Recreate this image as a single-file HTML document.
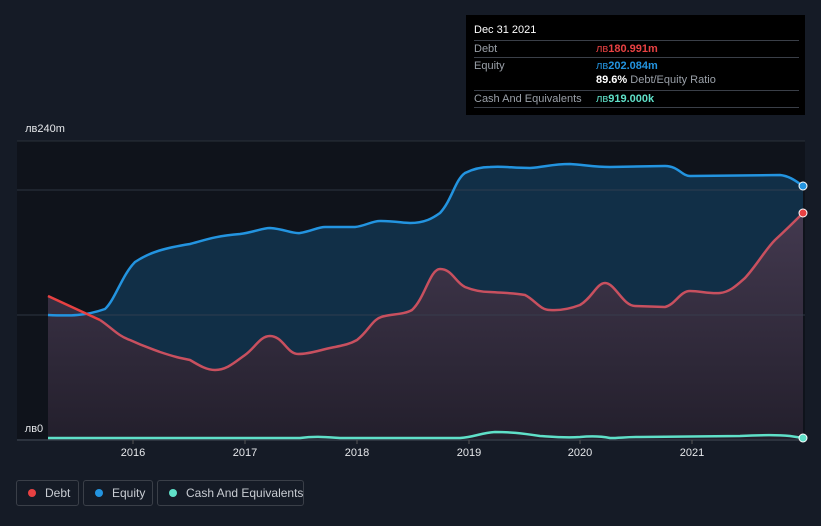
<!DOCTYPE html><html><head><style>
html,body{margin:0;width:821px;height:526px;overflow:hidden}
body{background:#151b26;font-family:"Liberation Sans",sans-serif;position:relative}
.tt{position:absolute;left:466px;top:15px;width:339px;height:100px;background:#000;color:#fff;font-size:11px}
.row{position:absolute;left:8px;right:6px;border-top:1px solid #3a3f48;height:17px}
.row span{position:absolute;top:2px}
.lg{position:absolute;top:480px;height:26px;border:1px solid #3a3f48;border-radius:3px;color:#c8ccd2;font-size:12px;line-height:24px;box-sizing:border-box;white-space:nowrap}
.lg i{position:absolute;left:11px;top:8px;width:8px;height:8px;border-radius:50%}
.lg span{position:absolute;left:28px}
</style></head><body>
<svg width="821" height="526" style="position:absolute;left:0;top:0">
<defs><linearGradient id="dg" x1="0" y1="0" x2="0" y2="1"><stop offset="0" stop-color="#43394f"/><stop offset="1" stop-color="#231f2c"/></linearGradient></defs>
<rect x="17" y="141" width="788" height="298" fill="#0f131b"/>
<path d="M48,315 C70,316 85,316 105,309 C115,300 122,275 135,262 C150,252 165,248 190,244 C205,240 215,236 240,234 C255,232 262,228 270,228 C285,229 292,234 300,233 C312,231 318,227 325,227 L355,227 C365,226 372,221 380,221 C395,221 403,223 410,223 C425,223 433,218 440,213 C452,200 455,180 465,173 C475,168 483,167 490,167 C505,166 512,168 530,168 C545,167 552,164 570,164 C585,165 595,167 610,167 L665,166 C678,166 682,176 690,176 L780,175 C790,176 797,182 803,186 L803,439 L48,439Z" fill="#12304a" opacity="0.95"/>
<path d="M48,296 C70,306 85,312 100,320 C112,328 118,336 130,340 C145,347 150,348 160,352 C175,357 180,358 190,360 C200,366 207,370 215,370 C227,370 235,362 245,355 C255,348 260,336 270,336 C283,336 287,354 298,354 C310,354 320,350 330,348 C345,345 350,344 357,340 C370,330 372,318 385,316 C395,314 405,314 412,310 C425,298 430,269 440,269 C452,269 455,282 465,287 C475,291 482,292 490,292 C505,293 515,293 525,295 C535,300 540,310 550,310 C562,311 572,308 580,305 C592,298 597,283 605,283 C615,283 623,306 635,306 L665,307 C675,305 680,291 690,291 C700,291 710,294 720,293 C730,292 737,285 745,278 C757,265 765,250 775,240 C787,229 795,221 803,213 L803,439 L48,439Z" fill="url(#dg)"/>
<line x1="17" y1="141" x2="805" y2="141" stroke="#2a303a"/>
<line x1="17" y1="190" x2="805" y2="190" stroke="#3a4452" stroke-opacity=".7"/>
<line x1="17" y1="315" x2="805" y2="315" stroke="#3a4452" stroke-opacity=".7"/>
<path d="M48,315 C70,316 85,316 105,309 C115,300 122,275 135,262 C150,252 165,248 190,244 C205,240 215,236 240,234 C255,232 262,228 270,228 C285,229 292,234 300,233 C312,231 318,227 325,227 L355,227 C365,226 372,221 380,221 C395,221 403,223 410,223 C425,223 433,218 440,213 C452,200 455,180 465,173 C475,168 483,167 490,167 C505,166 512,168 530,168 C545,167 552,164 570,164 C585,165 595,167 610,167 L665,166 C678,166 682,176 690,176 L780,175 C790,176 797,182 803,186" fill="none" stroke="#2394e0" stroke-width="2.5"/>
<path d="M48,296 L100,320" fill="none" stroke="#e84142" stroke-width="2.5"/>
<path d="M100,320 C112,328 118,336 130,340 C145,347 150,348 160,352 C175,357 180,358 190,360 C200,366 207,370 215,370 C227,370 235,362 245,355 C255,348 260,336 270,336 C283,336 287,354 298,354 C310,354 320,350 330,348 C345,345 350,344 357,340 C370,330 372,318 385,316 C395,314 405,314 412,310 C425,298 430,269 440,269 C452,269 455,282 465,287 C475,291 482,292 490,292 C505,293 515,293 525,295 C535,300 540,310 550,310 C562,311 572,308 580,305 C592,298 597,283 605,283 C615,283 623,306 635,306 L665,307 C675,305 680,291 690,291 C700,291 710,294 720,293 C730,292 737,285 745,278 C757,265 765,250 775,240 C787,229 795,221 803,213" fill="none" stroke="#c8505f" stroke-width="2.5"/>
<path d="M48,438 L300,438 C315,436 325,437 340,438 L460,438 C475,437 480,433 495,432 C510,432 520,433 540,436 C555,437 565,438 580,437 C590,436 600,436 610,438 C620,438 625,437 640,437 L740,436 C760,435 780,435 790,436 L803,438" fill="none" stroke="#5fe0c8" stroke-width="2.5"/>
<line x1="17" y1="440" x2="805" y2="440" stroke="#444b55"/>
<line x1="133" y1="440" x2="133" y2="444" stroke="#555"/><line x1="245" y1="440" x2="245" y2="444" stroke="#555"/><line x1="357" y1="440" x2="357" y2="444" stroke="#555"/><line x1="469" y1="440" x2="469" y2="444" stroke="#555"/><line x1="580" y1="440" x2="580" y2="444" stroke="#555"/><line x1="692" y1="440" x2="692" y2="444" stroke="#555"/>
<circle cx="803" cy="186" r="4" fill="#2394e0" stroke="#fff" stroke-width="1"/>
<circle cx="803" cy="213" r="4" fill="#e84142" stroke="#fff" stroke-width="1"/>
<circle cx="803" cy="438" r="4" fill="#5fe0c8" stroke="#fff" stroke-width="1"/>
<g fill="#e6e8eb" font-size="11" font-family="Liberation Sans, sans-serif" text-anchor="middle">
<text x="133" y="456">2016</text><text x="245" y="456">2017</text><text x="357" y="456">2018</text><text x="469" y="456">2019</text><text x="580" y="456">2020</text><text x="692" y="456">2021</text>
<text x="45" y="132">лв240m</text><text x="34" y="432">лв0</text></g>
</svg>
<div class="tt">
<div style="position:absolute;left:8px;top:9px">Dec 31 2021</div>
<div class="row" style="top:25px"><span style="color:#9aa0a8">Debt</span><span style="left:122px;color:#e84142">лв<b>180.991m</b></span></div>
<div class="row" style="top:42px"><span style="color:#9aa0a8">Equity</span><span style="left:122px;color:#2394e0">лв<b>202.084m</b></span></div>
<div style="position:absolute;left:130px;top:59px"><b>89.6%</b> <span style="color:#9aa0a8">Debt/Equity Ratio</span></div>
<div class="row" style="top:75px"><span style="color:#9aa0a8">Cash And Equivalents</span><span style="left:122px;color:#5fe0c8">лв<b>919.000k</b></span></div>
<div class="row" style="top:92px"></div>
</div>
<div class="lg" style="left:16px;width:63px"><i style="background:#e84142"></i><span>Debt</span></div>
<div class="lg" style="left:83px;width:70px"><i style="background:#2394e0"></i><span>Equity</span></div>
<div class="lg" style="left:157px;width:147px"><i style="background:#5fe0c8"></i><span>Cash And Equivalents</span></div>
</body></html>
